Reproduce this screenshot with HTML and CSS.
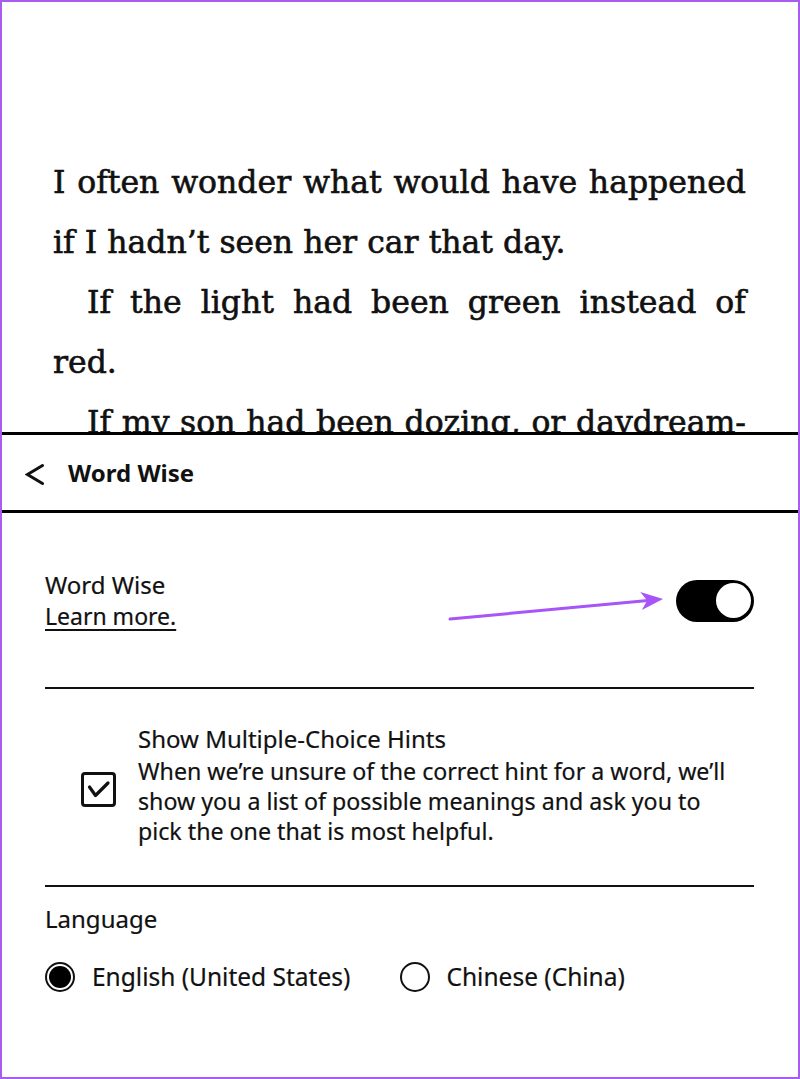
FILE: index.html
```html
<!DOCTYPE html>
<html lang="en">
<head>
<meta charset="utf-8">
<title>Word Wise</title>
<link rel="stylesheet" href="styles.css">
</head>
<body>
<div class="frame">
  <div class="book">
    <p class="ln just">I often wonder what would have happened</p>
    <p class="ln">if I hadn’t seen her car that day.</p>
    <p class="ln just ind">If the light had been green instead of</p>
    <p class="ln">red.</p>
    <p class="ln just ind">If my son had been dozing, or daydream-</p>
  </div>
  <div class="panel">
    <header class="bar">
      <svg class="back" width="20" height="24" viewBox="0 0 20 24"><polyline points="17.5,4.5 2.5,13.5 17.5,22.5" fill="none" stroke="#111" stroke-width="3" stroke-linecap="round" stroke-linejoin="miter"/></svg>
      <h1 class="title">Word Wise</h1>
    </header>
    <div class="settings">
      <section class="row toggle-row">
        <div class="txt">
          <div class="label">Word Wise</div>
          <a class="link">Learn more.</a>
        </div>
        <span class="switch"><span class="knob"></span></span>
        <svg class="arrow" width="220" height="34" viewBox="0 0 220 34"><line x1="2" y1="29" x2="200" y2="10.5" stroke="#a855f7" stroke-width="3" stroke-linecap="round"/><polygon points="215,9 192.3,2.1 199.1,10.5 193.9,20" fill="#a855f7"/></svg>
      </section>
      <hr class="rule">
      <section class="row check-row">
        <span class="checkbox"><svg width="35" height="35" viewBox="0 0 35 35"><polyline points="8.5,15 14.5,23.5 27,11" fill="none" stroke="#111" stroke-width="3.2" stroke-linecap="round" stroke-linejoin="round"/></svg></span>
        <div class="txt opt">
          <div class="opt-title">Show Multiple-Choice Hints</div>
          <div class="opt-desc">When we’re unsure of the correct hint for a word, we’ll show you a list of possible meanings and ask you to pick the one that is most helpful.</div>
        </div>
      </section>
      <hr class="rule">
      <section class="lang">
        <div class="label">Language</div>
        <div class="radios">
          <div class="radio on"><span class="dot"></span><span class="radio-label">English (United States)</span></div>
          <div class="radio"><span class="dot"></span><span class="radio-label">Chinese (China)</span></div>
        </div>
      </section>
    </div>
  </div>
</div>
</body>
</html>
```
FILE: styles.css
```css
html, body {
  margin: 0;
  padding: 0;
  background: #fff;
}

.frame {
  width: 800px;
  height: 1079px;
  box-sizing: border-box;
  border: 2px solid #a95cf0;
  overflow: hidden;
  background: #fff;
}

.book {
  height: 430px;
  box-sizing: border-box;
  overflow: hidden;
  padding: 150px 52px 0 51px;
  font-family: "DejaVu Serif", serif;
  font-size: 31.5px;
  line-height: 60px;
  color: #111;
  -webkit-text-stroke: 0.6px #111;
}

.ln {
  margin: 0;
}

.just {
  text-align: justify;
  text-align-last: justify;
}

.ind {
  padding-left: 34px;
}

.panel {
  border-top: 3px solid #000;
}

.bar {
  height: 75px;
  display: flex;
  align-items: center;
  border-bottom: 3px solid #000;
  padding-left: 23px;
}

.back {
  display: block;
}

.title {
  margin: 0 0 0 23px;
  font-family: "Noto Sans", sans-serif;
  font-weight: 700;
  font-size: 24px;
  color: #111;
}

.settings {
  padding: 0 44px 0 43px;
  font-family: "Noto Sans", sans-serif;
  font-size: 24px;
  color: #111;
  -webkit-text-stroke: 0.2px #111;
}

.toggle-row {
  position: relative;
  display: flex;
  justify-content: space-between;
  align-items: center;
  padding: 56px 0 55px;
  line-height: 31px;
}

.link {
  font-size: 23px;
  text-decoration: underline;
  text-underline-offset: 4px;
  text-decoration-thickness: 2px;
}

.switch {
  width: 78px;
  height: 42px;
  box-sizing: border-box;
  border-radius: 21px;
  background: #000;
  display: flex;
  align-items: center;
  justify-content: flex-end;
  padding-right: 3px;
}

.knob {
  width: 35px;
  height: 35px;
  border-radius: 50%;
  background: #fff;
}

.arrow {
  position: absolute;
  left: 403px;
  top: 77px;
}

.rule {
  border: 0;
  height: 2px;
  background: #111;
  margin: 0;
}

.check-row {
  display: flex;
  align-items: center;
  padding: 35px 0 39px;
  line-height: 30px;
}

.checkbox {
  flex: none;
  width: 35px;
  height: 35px;
  box-sizing: border-box;
  border: 3px solid #111;
  border-radius: 4px;
  margin: 8px 22px 0 36px;
  display: flex;
  align-items: center;
  justify-content: center;
}

.checkbox svg {
  display: block;
  flex: none;
}

.opt {
  max-width: 598px;
}

.opt-title {
  margin-bottom: 2px;
}

.opt-desc {
  font-size: 23.2px;
}

.lang {
  padding-top: 17px;
  line-height: 30px;
}

.radios {
  display: grid;
  grid-template-columns: 1fr 1fr;
  margin-top: 28px;
}

.radio {
  display: flex;
  align-items: center;
  gap: 17px;
}

.radio-label {
  font-size: 24.5px;
}

.dot {
  width: 30px;
  height: 30px;
  box-sizing: border-box;
  border: 2px solid #111;
  border-radius: 50%;
  display: flex;
  align-items: center;
  justify-content: center;
}

.radio.on .dot::after {
  content: "";
  width: 22px;
  height: 22px;
  border-radius: 50%;
  background: #000;
}
```
